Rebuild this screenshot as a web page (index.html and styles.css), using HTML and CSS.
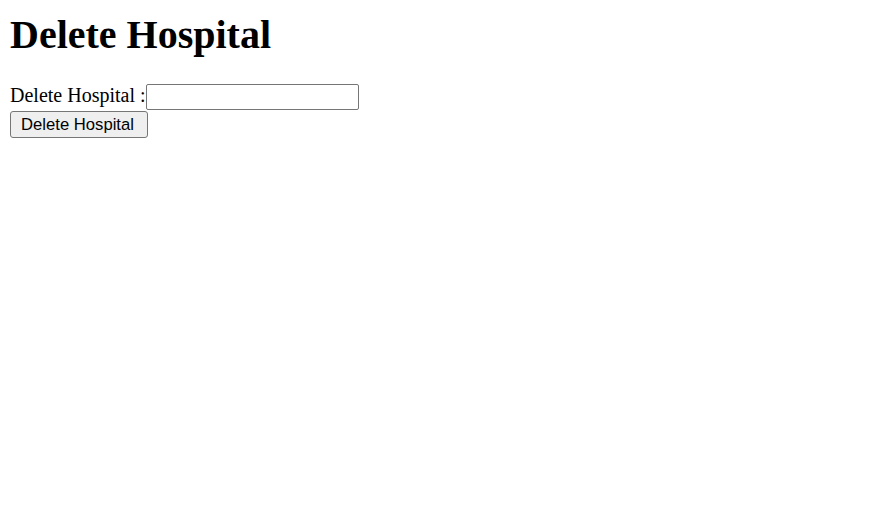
FILE: index.html
```html
<!DOCTYPE html>
<html>
<head>
<meta charset="utf-8">
<title>Delete Hospital</title>
<link rel="stylesheet" href="styles.css">
</head>
<body class="page">
<h1 class="title">Delete Hospital</h1>
<form class="form">
<label class="label" for="hid">Delete Hospital :</label><input class="field" id="hid" type="text"><br>
<button class="btn" type="button">Delete Hospital</button>
</form>
</body>
</html>
```
FILE: styles.css
```css
html, body {
  background: #ffffff;
}
.page {
  margin: 0;
  padding: 12px 10px 10px 10px;
  font-family: "Liberation Serif", "Times New Roman", serif;
  font-size: 20px;
  color: #000000;
}
.title {
  margin: 0 0 25px 0;
  font-size: 40px;
  font-weight: bold;
  line-height: 46px;
}
.form {
  margin: 0;
  line-height: 24px;
}
.label {
  font-size: 20px;
}
.field {
  box-sizing: border-box;
  width: 213px;
  height: 26px;
  margin: 0;
  padding: 1px 3px;
  border: 1px solid #767676;
  border-radius: 2px;
  font-family: "Liberation Sans", Arial, sans-serif;
  font-size: 16.67px;
  vertical-align: baseline;
  background: #ffffff;
}
.btn {
  box-sizing: border-box;
  width: 138px;
  height: 27px;
  margin: 1px 0 0 0;
  padding: 0 6px 0 10px;
  border: 1px solid #767676;
  border-radius: 3px;
  background: #efefef;
  color: #000000;
  font-family: "Liberation Sans", Arial, sans-serif;
  font-size: 16.67px;
  line-height: 20px;
  text-align: left;
}
```
